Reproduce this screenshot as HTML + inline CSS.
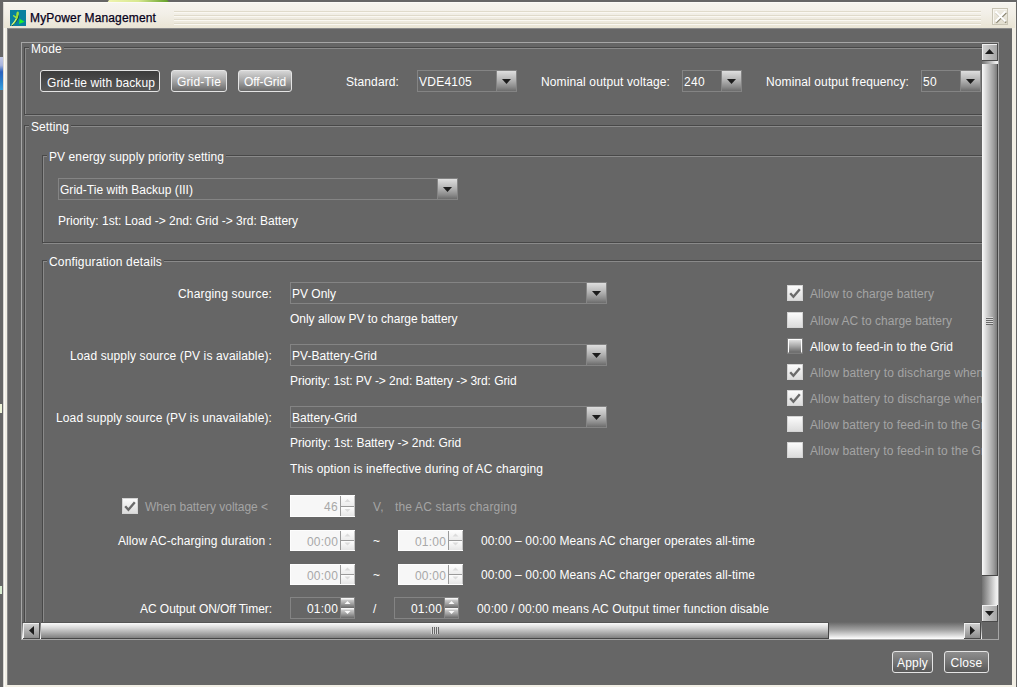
<!DOCTYPE html>
<html><head><meta charset="utf-8">
<style>
*{margin:0;padding:0;box-sizing:border-box}
html,body{width:1017px;height:687px;overflow:hidden;background:#666;font-family:"Liberation Sans",sans-serif;font-size:12px;color:#fff;position:relative}
.a{position:absolute}
.t{position:absolute;white-space:nowrap;line-height:14px;font-size:12px;color:#fff}
</style></head><body>
<svg class="a" style="left:105px;top:0px" width="66" height="3"><defs><linearGradient id="yg" x1="0" x2="1"><stop offset="0" stop-color="#f0f4b0"/><stop offset=".5" stop-color="#d8e890"/><stop offset="1" stop-color="#5a9a20"/></linearGradient></defs><path d="M2 3L4 0H62L65 3Z" fill="url(#yg)"/></svg>
<div class="a" style="left:0px;top:57px;width:3px;height:33px;background:linear-gradient(#c4cae6,#a8b4dc 25%,#2a62bc 45%,#2a80cc 75%,#38a0dc)"></div>
<div class="a" style="left:0px;top:404px;width:2px;height:9px;background:#eef4d8"></div>
<div class="a" style="left:0px;top:586px;width:2px;height:8px;background:#d8ecd0"></div>
<div class="a" style="left:3px;top:2px;width:1013px;height:690px;background:#f2efe5;border-left:1px solid #d8d6d0;border-top:1px solid #fbfaf6;box-shadow:inset 1px 0 0 #fbfaf6"></div>
<div class="a" style="left:4px;top:3px;width:1011px;height:25px;background:linear-gradient(#f6f4ee,#f2efe7 45%,#e9e4d4)"></div>
<svg class="a" style="left:10px;top:10px" width="16" height="16"><rect width="16" height="16" fill="#08809f"/>
<path d="M1 15.5C3 12.5 5 10.5 6 8.5L3.5 6.5C2.5 5.8 2.8 4.6 4 5.2L6.2 6.6C6.3 4.5 6.2 2.5 7.2 1.8C8.6 1 9.2 2.5 8.8 4.5C8.4 7.5 7.5 10 4 14.2Z" fill="#9ee03a"/>
<path d="M8.8 4.5C8.4 7.5 7.5 10 4 14.2L1 15.5L2.5 15.8C6 12.5 8.2 10 9 6.5Z" fill="#1a2a10"/>
<path d="M1 15.5C3 12.5 5 10.5 6 8.5L6.5 9C5.5 11 3.5 13.5 1.8 15.5Z" fill="#e8f8a0"/>
<path d="M9.6 8.8L9 14L14.6 11.8Z" fill="#1ef02a"/></svg>
<div class="t" style="left:30.00px;top:11px;letter-spacing:0.146px;color:#06001a;-webkit-text-stroke:0.25px #06001a">MyPower Management</div>
<div class="a" style="left:174px;top:11px;width:807px;height:1px;background:#e0dbcb;box-shadow:0 1px 0 #faf8f2"></div>
<div class="a" style="left:174px;top:15px;width:807px;height:1px;background:#e0dbcb;box-shadow:0 1px 0 #faf8f2"></div>
<div class="a" style="left:174px;top:19px;width:807px;height:1px;background:#e0dbcb;box-shadow:0 1px 0 #faf8f2"></div>
<div class="a" style="left:174px;top:23px;width:807px;height:1px;background:#e0dbcb;box-shadow:0 1px 0 #faf8f2"></div>
<div class="a" style="left:992px;top:8px;width:16px;height:17px;border:1px solid #c8c4b4;background:linear-gradient(#eeebe2,#e2decf);box-shadow:inset 1px 1px 0 #f8f6f0"></div>
<svg class="a" style="left:992px;top:8px" width="17" height="17"><path d="M3.5 4l10 10M13.5 4l-10 10" stroke="#8c8672" stroke-width="1.8" transform="translate(0.7,0.7)"/><path d="M3.5 3.5l10 10M13.5 3.5l-10 10" stroke="#fff" stroke-width="1.8"/></svg>
<div class="a" style="left:7px;top:28px;width:1005px;height:657px;background:#666;box-shadow:inset 1px 1px 0 #8a8a8a"></div>
<div class="a" style="left:21px;top:42px;width:978px;height:598px;border:1px solid #a6a6a6"></div>
<div class="a" style="left:22px;top:43px;width:960px;height:579px;overflow:hidden"><div class="a" style="left:-22px;top:-43px;width:1017px;height:687px">
<div class="a" style="left:25px;top:48px;width:998px;height:68px;border:1px solid #8a8a8a"></div>
<div class="a" style="left:24px;top:47px;width:998px;height:68px;border:1px solid #484848"></div>
<div class="a" style="left:29px;top:46px;width:35.0px;height:4px;background:#666"></div>
<div class="t" style="left:31.00px;top:42px;letter-spacing:0.246px;color:#fff;">Mode</div>
<div class="a" style="left:40px;top:70px;width:120px;height:22px;border:1px solid #e4e4e4;border-radius:3px;background:linear-gradient(#3c3c3c,#4a4a4a 50%,#585858)"></div>
<div class="t" style="left:47.00px;top:76px;letter-spacing:0.098px;color:#fff;">Grid-tie with backup</div>
<div class="a" style="left:171px;top:70px;width:56px;height:22px;border:1px solid #e4e4e4;border-radius:3px;background:linear-gradient(#d6d6d6,#a4a4a4 50%,#686868)"></div>
<div class="t" style="left:177.00px;top:75px;letter-spacing:0.137px;color:#fff;">Grid-Tie</div>
<div class="a" style="left:238px;top:70px;width:54px;height:22px;border:1px solid #e4e4e4;border-radius:3px;background:linear-gradient(#d6d6d6,#a4a4a4 50%,#686868)"></div>
<div class="t" style="left:244.00px;top:75px;letter-spacing:-0.055px;color:#fff;">Off-Grid</div>
<div class="t" style="left:346.00px;top:75px;letter-spacing:0.109px;color:#fff;">Standard:</div>
<div class="a" style="left:417px;top:70px;width:100px;height:22px;border:1px solid #848484"></div>
<div class="a" style="left:496px;top:71px;width:1px;height:20px;background:#848484"></div>
<div class="a" style="left:497px;top:71px;width:19px;height:20px;background:linear-gradient(#dedede,#b4b4b4 45%,#8a8a8a 80%,#6c6c6c)"></div>
<svg class="a" style="left:497px;top:71px" width="19" height="20"><path d="M5 8h9l-4.5 5z" fill="#1c1c1c"/></svg>
<div class="t" style="left:419.00px;top:75px;letter-spacing:0.234px;color:#fff;">VDE4105</div>
<div class="t" style="left:541.00px;top:75px;letter-spacing:0.128px;color:#fff;">Nominal output voltage:</div>
<div class="a" style="left:682px;top:70px;width:60px;height:22px;border:1px solid #848484"></div>
<div class="a" style="left:721px;top:71px;width:1px;height:20px;background:#848484"></div>
<div class="a" style="left:722px;top:71px;width:19px;height:20px;background:linear-gradient(#dedede,#b4b4b4 45%,#8a8a8a 80%,#6c6c6c)"></div>
<svg class="a" style="left:722px;top:71px" width="19" height="20"><path d="M5 8h9l-4.5 5z" fill="#1c1c1c"/></svg>
<div class="t" style="left:684.00px;top:75px;letter-spacing:0.328px;color:#fff;">240</div>
<div class="t" style="left:766.00px;top:75px;letter-spacing:0.118px;color:#fff;">Nominal output frequency:</div>
<div class="a" style="left:921px;top:70px;width:60px;height:22px;border:1px solid #848484"></div>
<div class="a" style="left:960px;top:71px;width:1px;height:20px;background:#848484"></div>
<div class="a" style="left:961px;top:71px;width:19px;height:20px;background:linear-gradient(#dedede,#b4b4b4 45%,#8a8a8a 80%,#6c6c6c)"></div>
<svg class="a" style="left:961px;top:71px" width="19" height="20"><path d="M5 8h9l-4.5 5z" fill="#1c1c1c"/></svg>
<div class="t" style="left:923.00px;top:75px;letter-spacing:0.328px;color:#fff;">50</div>
<div class="a" style="left:25px;top:126px;width:998px;height:598px;border:1px solid #8a8a8a"></div>
<div class="a" style="left:24px;top:125px;width:998px;height:598px;border:1px solid #484848"></div>
<div class="a" style="left:29px;top:124px;width:42.0px;height:4px;background:#666"></div>
<div class="t" style="left:31.00px;top:120px;letter-spacing:0.094px;color:#fff;">Setting</div>
<div class="a" style="left:43px;top:156px;width:978px;height:88px;border:1px solid #8a8a8a"></div>
<div class="a" style="left:42px;top:155px;width:978px;height:88px;border:1px solid #484848"></div>
<div class="a" style="left:47px;top:154px;width:179.0px;height:4px;background:#666"></div>
<div class="t" style="left:49.00px;top:150px;letter-spacing:0.089px;color:#fff;">PV energy supply priority setting</div>
<div class="a" style="left:58px;top:178px;width:400px;height:22px;border:1px solid #848484"></div>
<div class="a" style="left:437px;top:179px;width:1px;height:20px;background:#848484"></div>
<div class="a" style="left:438px;top:179px;width:19px;height:20px;background:linear-gradient(#dedede,#b4b4b4 45%,#8a8a8a 80%,#6c6c6c)"></div>
<svg class="a" style="left:438px;top:179px" width="19" height="20"><path d="M5 8h9l-4.5 5z" fill="#1c1c1c"/></svg>
<div class="t" style="left:60.00px;top:183px;letter-spacing:0.029px;color:#fff;">Grid-Tie with Backup (III)</div>
<div class="t" style="left:58.00px;top:214px;letter-spacing:-0.001px;color:#fff;">Priority: 1st: Load -&gt; 2nd: Grid -&gt; 3rd: Battery</div>
<div class="a" style="left:43px;top:261px;width:978px;height:498px;border:1px solid #8a8a8a"></div>
<div class="a" style="left:42px;top:260px;width:978px;height:498px;border:1px solid #484848"></div>
<div class="a" style="left:47px;top:259px;width:117.0px;height:4px;background:#666"></div>
<div class="t" style="left:49.00px;top:255px;letter-spacing:0.172px;color:#fff;">Configuration details</div>
<div class="t" style="left:178.00px;top:287px;letter-spacing:0.164px;color:#fff;">Charging source:</div>
<div class="a" style="left:290px;top:282px;width:317px;height:22px;border:1px solid #848484"></div>
<div class="a" style="left:586px;top:283px;width:1px;height:20px;background:#848484"></div>
<div class="a" style="left:587px;top:283px;width:19px;height:20px;background:linear-gradient(#dedede,#b4b4b4 45%,#8a8a8a 80%,#6c6c6c)"></div>
<svg class="a" style="left:587px;top:283px" width="19" height="20"><path d="M5 8h9l-4.5 5z" fill="#1c1c1c"/></svg>
<div class="t" style="left:292.00px;top:287px;letter-spacing:0.000px;color:#fff;">PV Only</div>
<div class="t" style="left:290.00px;top:312px;letter-spacing:-0.017px;color:#fff;">Only allow PV to charge battery</div>
<div class="t" style="left:70.00px;top:349px;letter-spacing:0.124px;color:#fff;">Load supply source (PV is available):</div>
<div class="a" style="left:290px;top:344px;width:317px;height:22px;border:1px solid #848484"></div>
<div class="a" style="left:586px;top:345px;width:1px;height:20px;background:#848484"></div>
<div class="a" style="left:587px;top:345px;width:19px;height:20px;background:linear-gradient(#dedede,#b4b4b4 45%,#8a8a8a 80%,#6c6c6c)"></div>
<svg class="a" style="left:587px;top:345px" width="19" height="20"><path d="M5 8h9l-4.5 5z" fill="#1c1c1c"/></svg>
<div class="t" style="left:292.00px;top:349px;letter-spacing:0.066px;color:#fff;">PV-Battery-Grid</div>
<div class="t" style="left:290.00px;top:374px;letter-spacing:-0.062px;color:#fff;">Priority: 1st: PV -&gt; 2nd: Battery -&gt; 3rd: Grid</div>
<div class="t" style="left:56.00px;top:411px;letter-spacing:0.135px;color:#fff;">Load supply source (PV is unavailable):</div>
<div class="a" style="left:290px;top:406px;width:317px;height:22px;border:1px solid #848484"></div>
<div class="a" style="left:586px;top:407px;width:1px;height:20px;background:#848484"></div>
<div class="a" style="left:587px;top:407px;width:19px;height:20px;background:linear-gradient(#dedede,#b4b4b4 45%,#8a8a8a 80%,#6c6c6c)"></div>
<svg class="a" style="left:587px;top:407px" width="19" height="20"><path d="M5 8h9l-4.5 5z" fill="#1c1c1c"/></svg>
<div class="t" style="left:292.00px;top:411px;letter-spacing:0.027px;color:#fff;">Battery-Grid</div>
<div class="t" style="left:290.00px;top:436px;letter-spacing:-0.019px;color:#fff;">Priority: 1st: Battery -&gt; 2nd: Grid</div>
<div class="t" style="left:290.00px;top:462px;letter-spacing:0.135px;color:#fff;">This option is ineffective during of AC charging</div>
<div class="a" style="left:787px;top:285px;width:16px;height:16px;border:1px solid #d4d4d4;background:linear-gradient(#fbfbfb,#e8e8e8 60%,#dcdcdc)"></div>
<svg class="a" style="left:787px;top:285px" width="16" height="16"><path d="M3.2 8.2L6.4 11.7L12.8 4.3" stroke="#6a6a6a" stroke-width="2.4" fill="none"/></svg>
<div class="t" style="left:810.00px;top:287px;letter-spacing:0.086px;color:#a4a4a4;">Allow to charge battery</div>
<div class="a" style="left:787px;top:312px;width:16px;height:16px;border:1px solid #d4d4d4;background:linear-gradient(#fbfbfb,#e8e8e8 60%,#dcdcdc)"></div>
<div class="t" style="left:810.00px;top:314px;letter-spacing:0.024px;color:#a4a4a4;">Allow AC to charge battery</div>
<div class="a" style="left:787px;top:338px;width:16px;height:16px;border:1px solid #7c7c7c;background:#6e6e6e"></div>
<div class="a" style="left:788px;top:339px;width:14px;height:14px;border:1px solid #fff;border-bottom-color:#707070;background:linear-gradient(#e0e0e0,#a8a8a8 50%,#6c6c6c)"></div>
<div class="t" style="left:810.00px;top:340px;letter-spacing:0.059px;color:#fff;">Allow to feed-in to the Grid</div>
<div class="a" style="left:787px;top:364px;width:16px;height:16px;border:1px solid #d4d4d4;background:linear-gradient(#fbfbfb,#e8e8e8 60%,#dcdcdc)"></div>
<svg class="a" style="left:787px;top:364px" width="16" height="16"><path d="M3.2 8.2L6.4 11.7L12.8 4.3" stroke="#6a6a6a" stroke-width="2.4" fill="none"/></svg>
<div class="t" style="left:810.00px;top:366px;letter-spacing:0.127px;color:#a4a4a4;">Allow battery to discharge when PV is unavailable</div>
<div class="a" style="left:787px;top:390px;width:16px;height:16px;border:1px solid #d4d4d4;background:linear-gradient(#fbfbfb,#e8e8e8 60%,#dcdcdc)"></div>
<svg class="a" style="left:787px;top:390px" width="16" height="16"><path d="M3.2 8.2L6.4 11.7L12.8 4.3" stroke="#6a6a6a" stroke-width="2.4" fill="none"/></svg>
<div class="t" style="left:810.00px;top:392px;letter-spacing:0.119px;color:#a4a4a4;">Allow battery to discharge when PV is available</div>
<div class="a" style="left:787px;top:416px;width:16px;height:16px;border:1px solid #d4d4d4;background:linear-gradient(#fbfbfb,#e8e8e8 60%,#dcdcdc)"></div>
<div class="t" style="left:810.00px;top:418px;letter-spacing:0.081px;color:#a4a4a4;">Allow battery to feed-in to the Grid when PV is available</div>
<div class="a" style="left:787px;top:442px;width:16px;height:16px;border:1px solid #d4d4d4;background:linear-gradient(#fbfbfb,#e8e8e8 60%,#dcdcdc)"></div>
<div class="t" style="left:810.00px;top:444px;letter-spacing:0.089px;color:#a4a4a4;">Allow battery to feed-in to the Grid when PV is unavailable</div>
<div class="a" style="left:122px;top:498px;width:16px;height:16px;border:1px solid #d4d4d4;background:linear-gradient(#fbfbfb,#e8e8e8 60%,#dcdcdc)"></div>
<svg class="a" style="left:122px;top:498px" width="16" height="16"><path d="M3.2 8.2L6.4 11.7L12.8 4.3" stroke="#6a6a6a" stroke-width="2.4" fill="none"/></svg>
<div class="t" style="left:145.00px;top:500px;letter-spacing:-0.032px;color:#a4a4a4;">When battery voltage &lt;</div>
<div class="a" style="left:290px;top:495px;width:65px;height:22px;border:1px solid #fdfdfd;background:#f7f7f7"></div>
<div class="a" style="left:340px;top:496px;width:1px;height:20px;background:#9a9a9a"></div>
<div class="a" style="left:354px;top:496px;width:1px;height:20px;background:#c4c4c4"></div>
<div class="a" style="left:341px;top:496px;width:13px;height:10px;background:linear-gradient(#fdfdfd,#ececec)"></div>
<div class="a" style="left:341px;top:506px;width:13px;height:1px;background:#9a9a9a"></div>
<div class="a" style="left:341px;top:507px;width:13px;height:9px;background:linear-gradient(#fdfdfd,#e6e6e6)"></div>
<svg class="a" style="left:341px;top:496px" width="13" height="20"><path d="M3.5 6.0h6l-3-3z M3.5 13.0h6l-3 3z" fill="#dcdcdc"/></svg>
<div class="t" style="left:324.00px;top:500px;letter-spacing:0.328px;color:#a8a8a8;">46</div>
<div class="t" style="left:373.00px;top:500px;letter-spacing:0.375px;color:#a4a4a4;">V,</div>
<div class="t" style="left:395.00px;top:500px;letter-spacing:0.180px;color:#a4a4a4;">the AC starts charging</div>
<div class="t" style="left:118.00px;top:534px;letter-spacing:0.093px;color:#fff;">Allow AC-charging duration :</div>
<div class="a" style="left:290px;top:530px;width:65px;height:21px;border:1px solid #fdfdfd;background:#f7f7f7"></div>
<div class="a" style="left:340px;top:531px;width:1px;height:19px;background:#9a9a9a"></div>
<div class="a" style="left:354px;top:531px;width:1px;height:19px;background:#c4c4c4"></div>
<div class="a" style="left:341px;top:531px;width:13px;height:9px;background:linear-gradient(#fdfdfd,#ececec)"></div>
<div class="a" style="left:341px;top:540px;width:13px;height:1px;background:#9a9a9a"></div>
<div class="a" style="left:341px;top:541px;width:13px;height:9px;background:linear-gradient(#fdfdfd,#e6e6e6)"></div>
<svg class="a" style="left:341px;top:531px" width="13" height="19"><path d="M3.5 5.5h6l-3-3z M3.5 11.5h6l-3 3z" fill="#dcdcdc"/></svg>
<div class="t" style="left:307.00px;top:535px;letter-spacing:0.197px;color:#a8a8a8;">00:00</div>
<div class="t" style="left:373.00px;top:534px;letter-spacing:-0.016px;color:#fff;">~</div>
<div class="a" style="left:398px;top:530px;width:65px;height:21px;border:1px solid #fdfdfd;background:#f7f7f7"></div>
<div class="a" style="left:448px;top:531px;width:1px;height:19px;background:#9a9a9a"></div>
<div class="a" style="left:462px;top:531px;width:1px;height:19px;background:#c4c4c4"></div>
<div class="a" style="left:449px;top:531px;width:13px;height:9px;background:linear-gradient(#fdfdfd,#ececec)"></div>
<div class="a" style="left:449px;top:540px;width:13px;height:1px;background:#9a9a9a"></div>
<div class="a" style="left:449px;top:541px;width:13px;height:9px;background:linear-gradient(#fdfdfd,#e6e6e6)"></div>
<svg class="a" style="left:449px;top:531px" width="13" height="19"><path d="M3.5 5.5h6l-3-3z M3.5 11.5h6l-3 3z" fill="#dcdcdc"/></svg>
<div class="t" style="left:415.00px;top:535px;letter-spacing:0.197px;color:#a8a8a8;">01:00</div>
<div class="t" style="left:481.00px;top:534px;letter-spacing:0.123px;color:#fff;">00:00 – 00:00 Means AC charger operates all-time</div>
<div class="a" style="left:290px;top:564px;width:65px;height:21px;border:1px solid #fdfdfd;background:#f7f7f7"></div>
<div class="a" style="left:340px;top:565px;width:1px;height:19px;background:#9a9a9a"></div>
<div class="a" style="left:354px;top:565px;width:1px;height:19px;background:#c4c4c4"></div>
<div class="a" style="left:341px;top:565px;width:13px;height:9px;background:linear-gradient(#fdfdfd,#ececec)"></div>
<div class="a" style="left:341px;top:574px;width:13px;height:1px;background:#9a9a9a"></div>
<div class="a" style="left:341px;top:575px;width:13px;height:9px;background:linear-gradient(#fdfdfd,#e6e6e6)"></div>
<svg class="a" style="left:341px;top:565px" width="13" height="19"><path d="M3.5 5.5h6l-3-3z M3.5 11.5h6l-3 3z" fill="#dcdcdc"/></svg>
<div class="t" style="left:307.00px;top:569px;letter-spacing:0.197px;color:#a8a8a8;">00:00</div>
<div class="t" style="left:373.00px;top:568px;letter-spacing:-0.016px;color:#fff;">~</div>
<div class="a" style="left:398px;top:564px;width:65px;height:21px;border:1px solid #fdfdfd;background:#f7f7f7"></div>
<div class="a" style="left:448px;top:565px;width:1px;height:19px;background:#9a9a9a"></div>
<div class="a" style="left:462px;top:565px;width:1px;height:19px;background:#c4c4c4"></div>
<div class="a" style="left:449px;top:565px;width:13px;height:9px;background:linear-gradient(#fdfdfd,#ececec)"></div>
<div class="a" style="left:449px;top:574px;width:13px;height:1px;background:#9a9a9a"></div>
<div class="a" style="left:449px;top:575px;width:13px;height:9px;background:linear-gradient(#fdfdfd,#e6e6e6)"></div>
<svg class="a" style="left:449px;top:565px" width="13" height="19"><path d="M3.5 5.5h6l-3-3z M3.5 11.5h6l-3 3z" fill="#dcdcdc"/></svg>
<div class="t" style="left:415.00px;top:569px;letter-spacing:0.197px;color:#a8a8a8;">00:00</div>
<div class="t" style="left:481.00px;top:568px;letter-spacing:0.123px;color:#fff;">00:00 – 00:00 Means AC charger operates all-time</div>
<div class="t" style="left:140.00px;top:602px;letter-spacing:-0.048px;color:#fff;">AC Output ON/Off Timer:</div>
<div class="a" style="left:290px;top:597px;width:65px;height:22px;border:1px solid #848484"></div>
<div class="a" style="left:341px;top:598px;width:13px;height:10px;background:linear-gradient(#f6f6f6,#f6f6f6 1px,#cacaca 2px,#a4a4a4 55%,#6a6a6a)"></div>
<div class="a" style="left:341px;top:608px;width:13px;height:10px;background:linear-gradient(#f6f6f6,#f6f6f6 1px,#cacaca 2px,#a4a4a4 55%,#6a6a6a)"></div>
<div class="a" style="left:340px;top:598px;width:1px;height:20px;background:#848484"></div>
<svg class="a" style="left:341px;top:598px" width="13" height="20"><path d="M3.5 6.0h6l-3-3z M3.5 13.0h6l-3 3z" fill="#fafafa"/></svg>
<div class="t" style="left:307.00px;top:602px;letter-spacing:0.197px;color:#fff;">01:00</div>
<div class="t" style="left:373.00px;top:602px;letter-spacing:-0.328px;color:#fff;">/</div>
<div class="a" style="left:394px;top:597px;width:65px;height:22px;border:1px solid #848484"></div>
<div class="a" style="left:445px;top:598px;width:13px;height:10px;background:linear-gradient(#f6f6f6,#f6f6f6 1px,#cacaca 2px,#a4a4a4 55%,#6a6a6a)"></div>
<div class="a" style="left:445px;top:608px;width:13px;height:10px;background:linear-gradient(#f6f6f6,#f6f6f6 1px,#cacaca 2px,#a4a4a4 55%,#6a6a6a)"></div>
<div class="a" style="left:444px;top:598px;width:1px;height:20px;background:#848484"></div>
<svg class="a" style="left:445px;top:598px" width="13" height="20"><path d="M3.5 6.0h6l-3-3z M3.5 13.0h6l-3 3z" fill="#fafafa"/></svg>
<div class="t" style="left:411.00px;top:602px;letter-spacing:0.197px;color:#fff;">01:00</div>
<div class="t" style="left:477.00px;top:602px;letter-spacing:0.140px;color:#fff;">00:00 / 00:00 means AC Output timer function disable</div>
</div></div>
<div class="a" style="left:982px;top:43px;width:16px;height:579px;background:linear-gradient(90deg,#707070,#a8a8a8 40%,#e8e8e8 85%,#f4f4f4)"></div>
<div class="a" style="left:982px;top:43px;width:16px;height:1px;background:#555"></div>
<div class="a" style="left:982px;top:44px;width:16px;height:17px;background:linear-gradient(90deg,#d4d4d4,#a4a4a4);border-right:1px solid #4a4a4a;border-bottom:1px solid #4a4a4a;box-shadow:inset 1px 1px 0 #f0f0f0"></div>
<svg class="a" style="left:982px;top:44px" width="16" height="17"><path d="M3 10h9l-4.5-5z" fill="#1c1c1c"/></svg>
<div class="a" style="left:982px;top:64px;width:16px;height:512px;background:linear-gradient(90deg,#fafafa,#d0d0d0 35%,#9a9a9a 80%,#7a7a7a);border-right:1px solid #474747;border-bottom:1px solid #474747"></div>
<div class="a" style="left:986px;top:317px;width:7px;height:1px;background:#dadada"></div>
<div class="a" style="left:986px;top:318px;width:7px;height:1px;background:#686868"></div>
<div class="a" style="left:986px;top:319px;width:7px;height:1px;background:#dadada"></div>
<div class="a" style="left:986px;top:320px;width:7px;height:1px;background:#686868"></div>
<div class="a" style="left:986px;top:321px;width:7px;height:1px;background:#dadada"></div>
<div class="a" style="left:986px;top:322px;width:7px;height:1px;background:#686868"></div>
<div class="a" style="left:986px;top:323px;width:7px;height:1px;background:#dadada"></div>
<div class="a" style="left:986px;top:324px;width:7px;height:1px;background:#686868"></div>
<div class="a" style="left:982px;top:605px;width:16px;height:17px;background:linear-gradient(90deg,#d4d4d4,#a4a4a4);border-right:1px solid #4a4a4a;border-bottom:1px solid #4a4a4a;box-shadow:inset 1px 1px 0 #f0f0f0"></div>
<svg class="a" style="left:982px;top:605px" width="16" height="17"><path d="M3 6h9l-4.5 5z" fill="#1c1c1c"/></svg>
<div class="a" style="left:22px;top:622px;width:960px;height:17px;background:linear-gradient(#666,#a0a0a0 45%,#e6e6e6 85%,#fff)"></div>
<div class="a" style="left:22px;top:622px;width:18px;height:1px;background:#555"></div>
<div class="a" style="left:23px;top:623px;width:17px;height:16px;background:linear-gradient(#d4d4d4,#8c8c8c);border-right:1px solid #4a4a4a;border-bottom:1px solid #4a4a4a;box-shadow:inset 1px 1px 0 #f0f0f0"></div>
<svg class="a" style="left:23px;top:623px" width="17" height="16"><path d="M11 3v9l-5-4.5z" fill="#1c1c1c"/></svg>
<div class="a" style="left:41px;top:622px;width:788px;height:1px;background:#555"></div>
<div class="a" style="left:41px;top:623px;width:788px;height:16px;background:linear-gradient(#fafafa,#d4d4d4 35%,#a0a0a0 75%,#808080);border-right:1px solid #474747;border-bottom:1px solid #474747"></div>
<div class="a" style="left:431px;top:627px;width:1px;height:7px;background:#dadada"></div>
<div class="a" style="left:432px;top:627px;width:1px;height:7px;background:#686868"></div>
<div class="a" style="left:433px;top:627px;width:1px;height:7px;background:#dadada"></div>
<div class="a" style="left:434px;top:627px;width:1px;height:7px;background:#686868"></div>
<div class="a" style="left:435px;top:627px;width:1px;height:7px;background:#dadada"></div>
<div class="a" style="left:436px;top:627px;width:1px;height:7px;background:#686868"></div>
<div class="a" style="left:437px;top:627px;width:1px;height:7px;background:#dadada"></div>
<div class="a" style="left:438px;top:627px;width:1px;height:7px;background:#686868"></div>
<div class="a" style="left:964px;top:622px;width:17px;height:1px;background:#555"></div>
<div class="a" style="left:964px;top:623px;width:17px;height:16px;background:linear-gradient(#d4d4d4,#8c8c8c);border-right:1px solid #4a4a4a;border-bottom:1px solid #4a4a4a;box-shadow:inset 1px 1px 0 #f0f0f0"></div>
<svg class="a" style="left:964px;top:623px" width="17" height="16"><path d="M6 3v9l5-4.5z" fill="#1c1c1c"/></svg>
<div class="a" style="left:982px;top:622px;width:16px;height:17px;background:#666"></div>
<div class="a" style="left:892px;top:651px;width:41px;height:22px;border:1px solid #e4e4e4;border-radius:3px;background:linear-gradient(#8e8e8e,#747474 50%,#585858)"></div>
<div class="t" style="left:897.00px;top:656px;letter-spacing:0.197px;color:#fff;">Apply</div>
<div class="a" style="left:944px;top:651px;width:45px;height:22px;border:1px solid #e4e4e4;border-radius:3px;background:linear-gradient(#8e8e8e,#747474 50%,#585858)"></div>
<div class="t" style="left:950.50px;top:656px;letter-spacing:0.263px;color:#fff;">Close</div>
</body></html>
